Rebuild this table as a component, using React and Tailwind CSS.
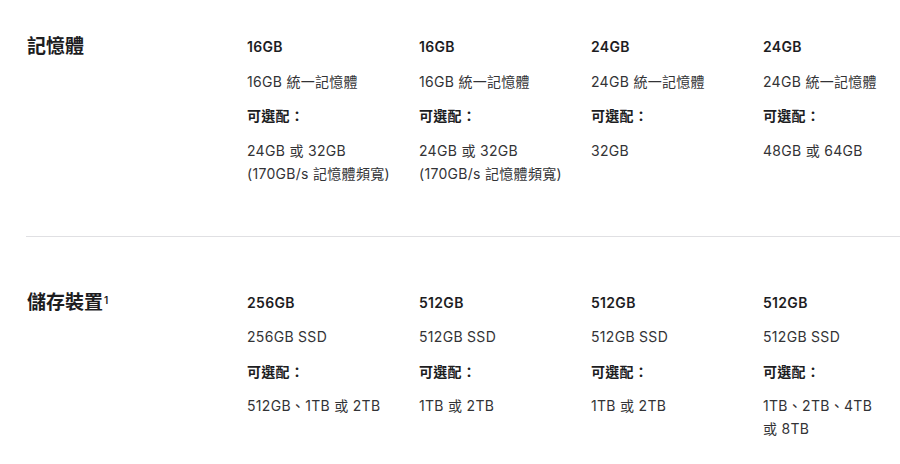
const sections = [
  {
    title: '記憶體',
    sup: null,
    cols: [
      { head: '16GB', desc: '16GB 統一記憶體', options: ['24GB 或 32GB', '(170GB/s 記憶體頻寬)'] },
      { head: '16GB', desc: '16GB 統一記憶體', options: ['24GB 或 32GB', '(170GB/s 記憶體頻寬)'] },
      { head: '24GB', desc: '24GB 統一記憶體', options: ['32GB'] },
      { head: '24GB', desc: '24GB 統一記憶體', options: ['48GB 或 64GB'] },
    ],
  },
  {
    title: '儲存裝置',
    sup: '1',
    cols: [
      { head: '256GB', desc: '256GB SSD', options: ['512GB、1TB 或 2TB'] },
      { head: '512GB', desc: '512GB SSD', options: ['1TB 或 2TB'] },
      { head: '512GB', desc: '512GB SSD', options: ['1TB 或 2TB'] },
      { head: '512GB', desc: '512GB SSD', options: ['1TB、2TB、4TB', '或 8TB'] },
    ],
  },
];

function SpecColumn({ col }) {
  return (
    <div className="flex flex-col gap-[11.5px] text-[14px] leading-[23px] tracking-[0.3px]">
      <p className="font-semibold text-[#1d1d1f]">{col.head}</p>
      <p className="text-[#333336]">{col.desc}</p>
      <p className="font-semibold text-[#1d1d1f]">可選配：</p>
      <p className="text-[#333336]">
        {col.options.map((line, i) => (
          <span key={i} className="block">{line}</span>
        ))}
      </p>
    </div>
  );
}

export default function App() {
  const font = "font-['Inter','Noto_Sans_CJK_TC',sans-serif]";
  return (
    <div className={`w-[900px] h-[464px] bg-white overflow-hidden ${font}`}>
      {sections.map((s, i) => (
        <div key={s.title}>
          {i > 0 && <div className="ml-[26px] h-px bg-[#e0e0e3]" />}
          <div className={`flex pl-[27px] ${i > 0 ? 'pt-[54px]' : 'pt-[35px]'} pb-[51px]`}>
            <h2 className="w-[220px] shrink-0 text-[19px] leading-[23px] font-semibold text-[#1d1d1f]">
              {s.title}
              {s.sup && <sup className="text-[10px] font-semibold ml-px">{s.sup}</sup>}
            </h2>
            <div className="grid grid-cols-[172px_172px_172px_172px]">
              {s.cols.map((c, j) => (
                <SpecColumn key={j} col={c} />
              ))}
            </div>
          </div>
        </div>
      ))}
    </div>
  );
}
